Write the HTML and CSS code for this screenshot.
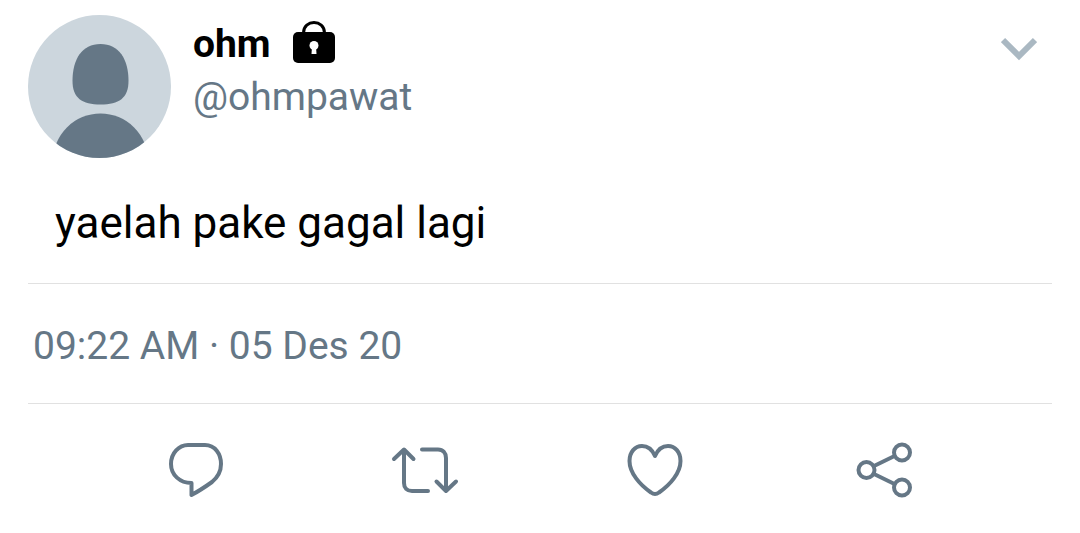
FILE: index.html
```html
<!DOCTYPE html>
<html lang="id">
<head>
  <meta charset="UTF-8" />
  <meta name="viewport" content="width=device-width, initial-scale=1.0"/>
  <title>ohm (@ohmpawat)</title>
  <link rel="stylesheet" href="styles.css">
</head>
<body>
  <article class="tweet">
    <header class="tweet-header">
      <svg class="avatar" viewBox="0 0 143 143" role="img" aria-label="Foto profil">
        <clipPath id="avatar-clip"><circle cx="71.5" cy="71.5" r="71.5"/></clipPath>
        <g clip-path="url(#avatar-clip)">
          <rect width="143" height="143" fill="#ccd6dd"/>
          <path fill="#657786" d="M72.500 29C91 29 100.500 44 100.500 66C100.500 83 91 89.500 72.500 89.500C54 89.500 44.500 83 44.500 66C44.500 44 54 29 72.500 29Z"/>
          <circle cx="72.500" cy="146" r="47.500" fill="#657786"/>
        </g>
      </svg>
      <div class="user">
        <div class="name-row">
          <span class="name">ohm</span>
          <svg class="lock" viewBox="0 0 42 44" role="img" aria-label="Akun terkunci">
            <path d="M10.500 14V12C10.500 -2 31.500 -2 31.500 12V14" fill="none" stroke="#000" stroke-width="3"/>
            <rect y="11" width="42" height="31" rx="5"/>
            <circle cx="21" cy="24.500" r="4.500" fill="#fff"/>
            <path d="M19 26H23L23.500 33H18.500Z" fill="#fff"/>
          </svg>
        </div>
        <span class="handle">@ohmpawat</span>
      </div>
      <button type="button" class="more" aria-label="Lainnya">
        <svg viewBox="0 0 36 24"><path d="M2 3L18 19L34 3" fill="none" stroke="currentColor" stroke-width="6"/></svg>
      </button>
    </header>

    <p class="tweet-text">yaelah pake gagal lagi</p>
    <p class="tweet-time">09:22 AM · 05 Des 20</p>

    <div class="actions">
      <button type="button" aria-label="Balas">
        <svg viewBox="0 0 80 80"><path d="M32 15H49C59 15 65 24 65 34C65 41 62 47 56 52C49 57 43 61 35.500 65V53C24 53 15 45 15 34C15 23 23 15 32 15Z"/></svg>
      </button>
      <button type="button" aria-label="Retweet">
        <svg viewBox="0 0 80 80">
          <path d="M9 29L19 19.500L28.500 29M19 20V53C19 58 22 61 27 61H43"/>
          <path d="M37 19.500H53C58 19.500 61 23 61 28V61M51.500 51.500L61 61L71 51.500"/>
        </svg>
      </button>
      <button type="button" aria-label="Suka">
        <svg viewBox="0 0 80 80"><path d="M40 26C37 19 33 16 27 16C20 16 14.500 22 14.500 31C14.500 43 25 55 36 62.500Q40 65.500 44 62.500C55 55 65.500 43 65.500 31C65.500 22 60 16 53 16C47 16 43 19 40 26Z"/></svg>
      </button>
      <button type="button" aria-label="Bagikan">
        <svg viewBox="0 0 80 80">
          <circle cx="22.500" cy="40" r="8"/>
          <circle cx="58" cy="22.500" r="8"/>
          <circle cx="58" cy="57.500" r="8"/>
          <path d="M30 36L50.500 26M30 44L50.500 54"/>
        </svg>
      </button>
    </div>
  </article>
</body>
</html>
```
FILE: styles.css
```css
body {
  margin: 0;
  background: #fff;
  color: #000;
  font-family: Roboto, sans-serif;
}
.tweet {
  padding: 15px 28px;
}
.tweet-header {
  display: flex;
  align-items: flex-start;
}
.avatar {
  width: 143px;
  height: 143px;
  flex: none;
}
.user {
  padding-top: 3px;
  margin-left: 22px;
  font-size: 39px;
  line-height: 53px;
}
.name-row {
  display: flex;
  align-items: center;
  gap: 22px;
}
.name {
  font-weight: bold;
}
.handle {
  color: #657786;
}
.lock {
  width: 42px;
  height: 44px;
  margin-bottom: 4px;
}
button {
  padding: 0;
  border: none;
  background: none;
  color: #657786;
  cursor: pointer;
}
button svg {
  display: block;
}
.more {
  margin: 22px 15px 0 auto;
  color: #aab8c2;
}
.more svg {
  width: 36px;
  height: 24px;
}
.tweet-text {
  margin: 39px 0 0;
  padding: 0 27px 34px;
  font-size: 44px;
  line-height: 52px;
}
.tweet-time {
  margin: 0;
  padding: 38px 5px 33px;
  border: solid #e1e1e1;
  border-width: 1px 0;
  color: #657786;
  font-size: 39px;
  line-height: 48px;
}
.actions {
  display: grid;
  grid-template-columns: repeat(4, 1fr);
  justify-items: center;
  padding: 26px 53px 0;
}
.actions svg {
  width: 80px;
  height: 80px;
  fill: none;
  stroke: currentColor;
  stroke-width: 4;
  stroke-linecap: round;
  stroke-linejoin: round;
}
```
